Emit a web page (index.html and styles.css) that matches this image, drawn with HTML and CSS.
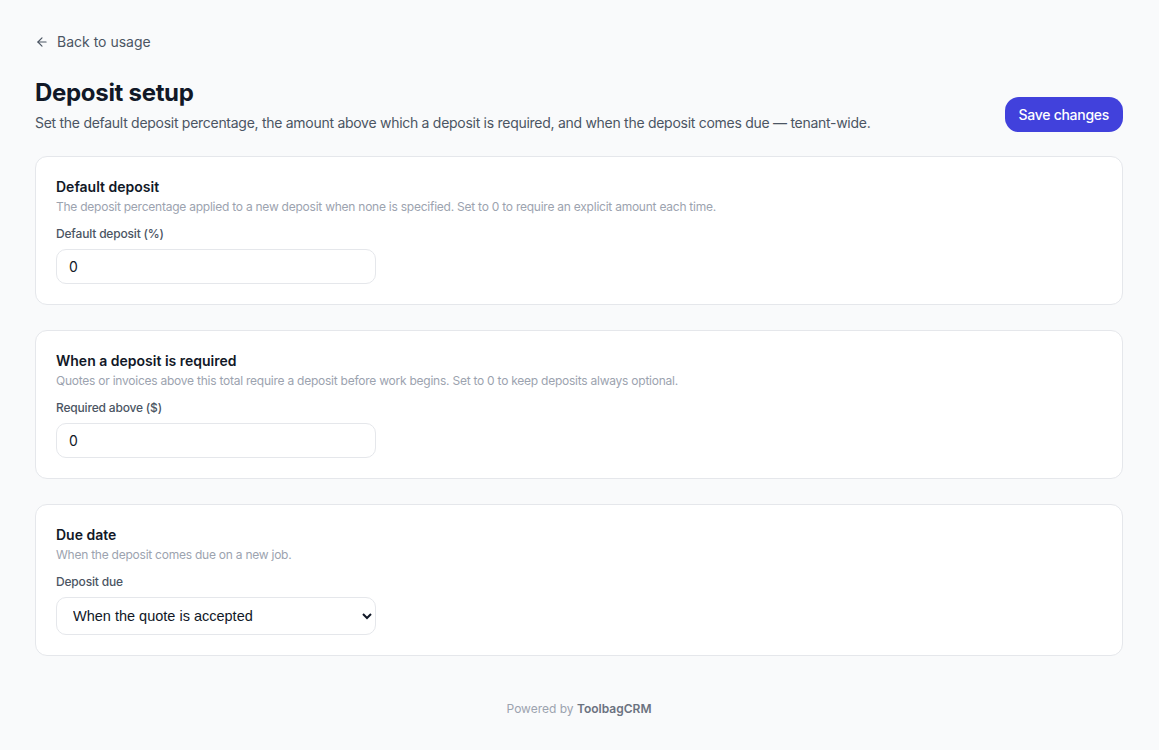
FILE: index.html
```html
<!DOCTYPE html>
<html lang="en">
<head>
  <meta charset="UTF-8" />
  <meta name="viewport" content="width=device-width, initial-scale=1.0" />
  <title>Deposit setup</title>
  <link rel="stylesheet" href="styles.css">
</head>
<body>
  <div class="page">
    <a class="back" href="#">
      <svg width="14" height="14" viewBox="0 0 24 24" fill="none" stroke="currentColor" stroke-width="2" stroke-linecap="round" stroke-linejoin="round"><path d="M19 12H5"/><path d="M12 19l-7-7 7-7"/></svg>
      Back to usage
    </a>

    <div class="header">
      <div>
        <h1>Deposit setup</h1>
        <p class="subtitle">Set the default deposit percentage, the amount above which a deposit is required, and when the deposit comes due — tenant-wide.</p>
      </div>
      <button class="save">Save changes</button>
    </div>

    <div class="card">
      <h2>Default deposit</h2>
      <p class="desc">The deposit percentage applied to a new deposit when none is specified. Set to 0 to require an explicit amount each time.</p>
      <label class="field-label" for="defaultDeposit">Default deposit (%)</label>
      <input class="field" id="defaultDeposit" type="text" value="0">
    </div>

    <div class="card">
      <h2>When a deposit is required</h2>
      <p class="desc">Quotes or invoices above this total require a deposit before work begins. Set to 0 to keep deposits always optional.</p>
      <label class="field-label" for="requiredAbove">Required above ($)</label>
      <input class="field" id="requiredAbove" type="text" value="0">
    </div>

    <div class="card">
      <h2>Due date</h2>
      <p class="desc">When the deposit comes due on a new job.</p>
      <label class="field-label" for="depositDue">Deposit due</label>
      <select class="field select" id="depositDue">
        <option>When the quote is accepted</option>
        <option>When the job is scheduled</option>
        <option>Before work starts</option>
      </select>
    </div>

    <p class="footer">Powered by <strong>ToolbagCRM</strong></p>
  </div>
</body>
</html>
```

FILE: styles.css
```css
body {
  margin: 0;
  background: #f9fafb;
  color: #111827;
  font-family: Inter, "Noto Sans", sans-serif;
}
.page {
  padding: 32px 36px 0 35px;
}
.back {
  display: inline-flex;
  align-items: center;
  gap: 8px;
  color: #4b5563;
  font-size: 14px;
  line-height: 20px;
  text-decoration: none;
}
.header {
  display: flex;
  justify-content: space-between;
  align-items: flex-end;
  margin-top: 24px;
  margin-bottom: 23px;
}
h1 {
  margin: 0;
  font-size: 24px;
  line-height: 32px;
  font-weight: 700;
  letter-spacing: -0.3px;
}
.subtitle {
  margin: 4px 0 0;
  font-size: 14px;
  line-height: 20px;
  color: #4b5563;
  letter-spacing: -0.02em;
}
.save {
  background: #4141dc;
  color: #fff;
  border: none;
  border-radius: 14px;
  height: 35px;
  padding: 0 14px;
  font-family: inherit;
  font-size: 14px;
  font-weight: 500;
  letter-spacing: -0.02em;
  margin-bottom: 1px;
  cursor: pointer;
}
.card {
  background: #fff;
  border: 1px solid #e5e7eb;
  border-radius: 12px;
  padding: 20px;
  margin-bottom: 25px;
}
h2 {
  margin: 0;
  font-size: 14px;
  line-height: 20px;
  font-weight: 600;
}
.desc {
  margin: 0;
  font-size: 12px;
  line-height: 20px;
  color: #9ca3af;
  letter-spacing: -0.02em;
}
.field-label {
  display: block;
  margin-top: 7px;
  margin-bottom: 5px;
  font-size: 12px;
  line-height: 20px;
  color: #4b5563;
  font-weight: 500;
  letter-spacing: -0.015em;
}
.field {
  box-sizing: border-box;
  width: 320px;
  height: 35px;
  border: 1px solid #e5e7eb;
  border-radius: 10px;
  padding: 0 12px;
  font-family: inherit;
  font-size: 14px;
  color: #111827;
  background: #fff;
}
.select {
  height: 38px;
  padding: 0 12px;
  font-family: "Liberation Sans", Arial, sans-serif;
  font-size: 14.5px;
}
.footer {
  margin: 45px 0 0;
  padding-bottom: 30px;
  text-align: center;
  font-size: 12px;
  color: #9ca3af;
}
.footer strong {
  color: #6b7280;
  font-weight: 600;
}
```
